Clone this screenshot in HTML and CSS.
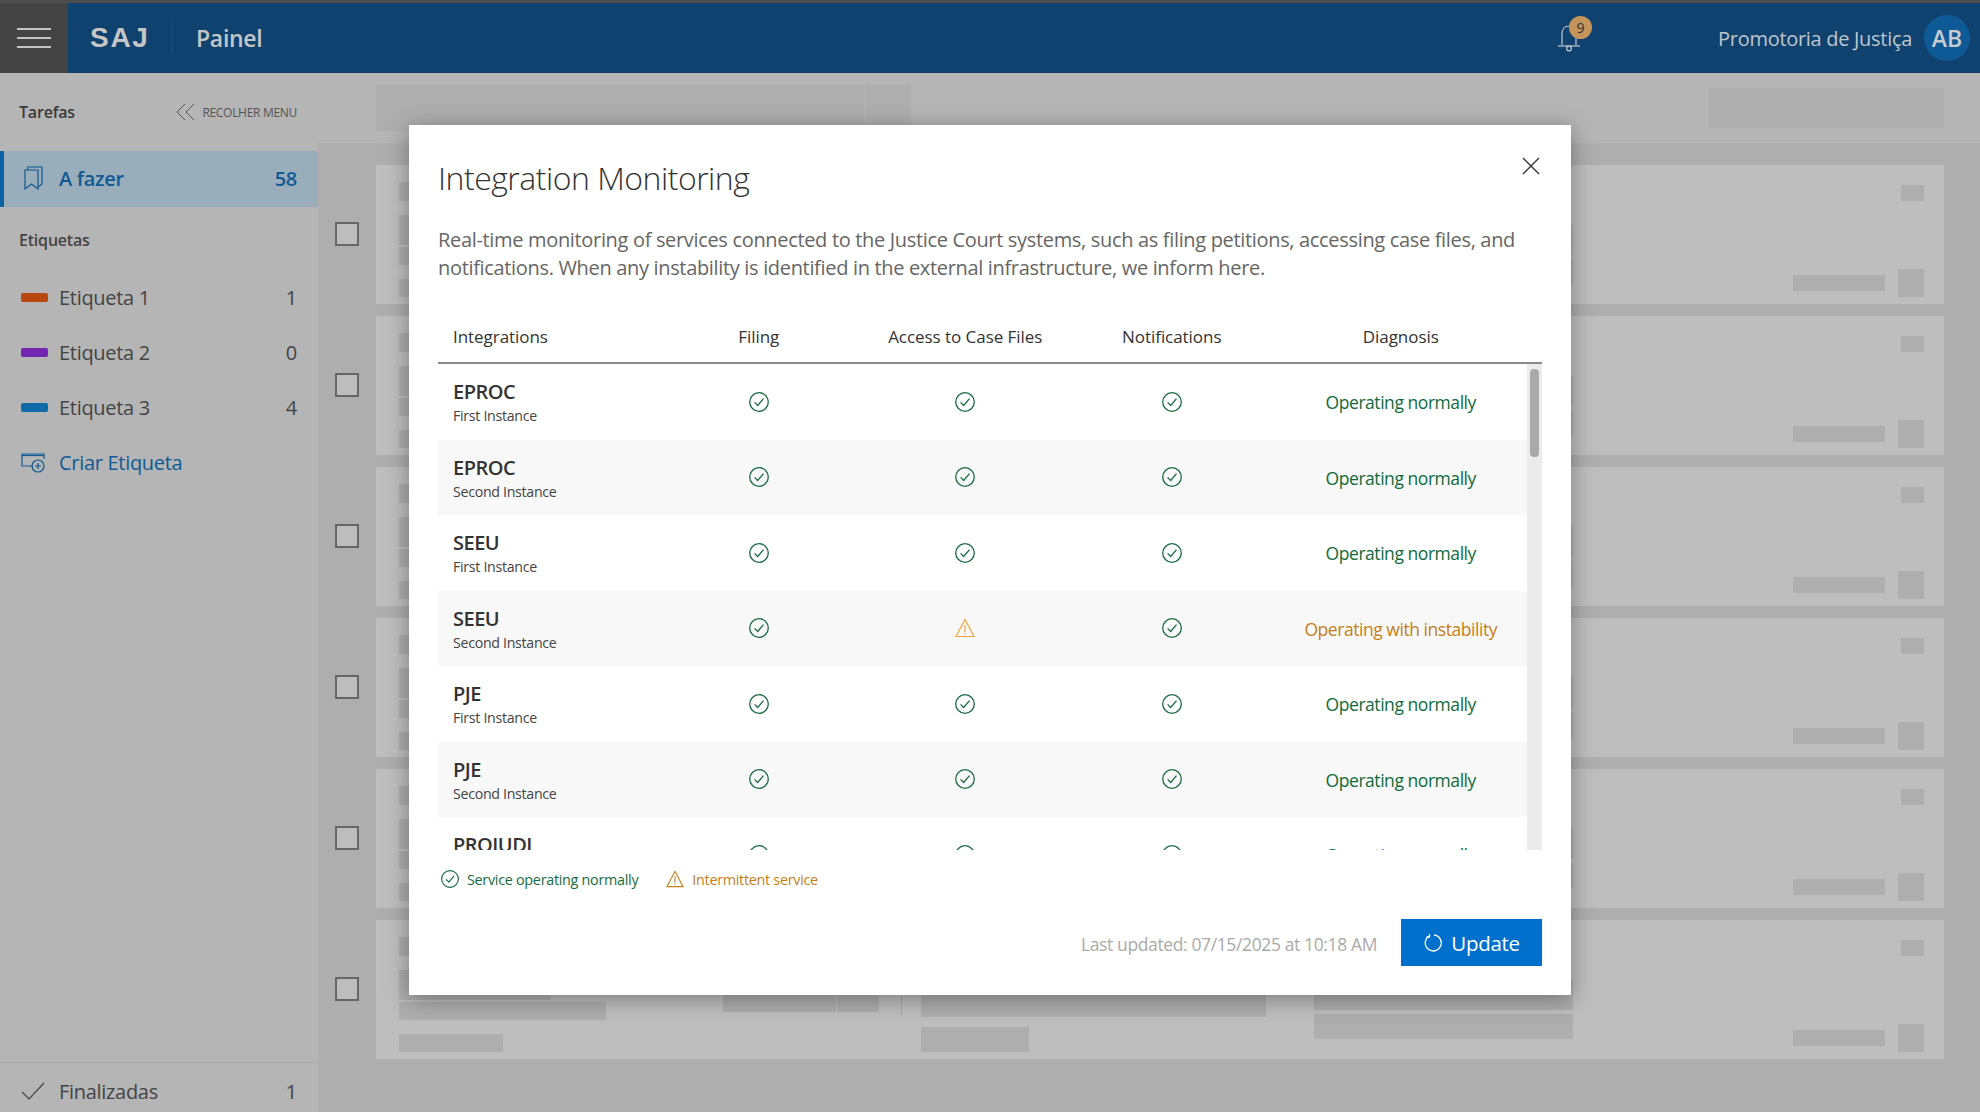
FILE: index.html
```html
<!DOCTYPE html>
<html lang="en">
<head>
    <meta charset="UTF-8">
    <title>SAJ Painel</title>
    <link rel="stylesheet" href="styles.css">
</head>
<body>

<svg class="sprite" width="0" height="0">
    <symbol id="ok" viewBox="0 0 20 20">
        <circle cx="10" cy="10" r="9.300" fill="none" stroke="currentColor" stroke-width="1.300"/>
        <path d="M5.600 10.400l3.100 3.100 5.800-6.900" fill="none" stroke="currentColor" stroke-width="1.300"/>
    </symbol>
    <symbol id="warn" viewBox="0 0 20 20">
        <path d="M10 1.500L19 18.500H1z" fill="none" stroke="currentColor" stroke-width="1.200"/>
        <path d="M10 7v7M10 15v1.400" fill="none" stroke="currentColor" stroke-width="1.200"/>
    </symbol>
</svg>

<header class="topbar">
    <button class="menu-btn">
        <span></span><span></span><span></span>
    </button>
    <div class="logo">SAJ</div>
    <div class="app-title">Painel</div>
    <div class="bell">
        <svg width="24" height="30" viewBox="0 0 24 30" fill="none" stroke="#c3c9cf" stroke-width="1.2">
            <path d="M5 22V11c0-5 3-8 7-8s7 3 7 8v11"/>
            <path d="M1 23h22"/>
            <circle cx="12" cy="25.5" r="2.4"/>
        </svg>
        <span class="badge">9</span>
    </div>
    <div class="user-name">Promotoria de Justiça</div>
    <div class="avatar">AB</div>
</header>

<div class="layout">
    <aside class="sidebar">
        <div class="side-head">
            <span class="side-title">Tarefas</span>
            <span class="collapse">
                <svg width="19" height="18" viewBox="0 0 19 18" fill="none" stroke="#555" stroke-width="1">
                    <path d="M9 1L1 9l8 8M18 1l-8 8 8 8"/>
                </svg>
                RECOLHER MENU
            </span>
        </div>
        <div class="side-item active">
            <svg class="item-icon" width="19" height="24" viewBox="0 0 19 24" fill="none" stroke="#0f5a94" stroke-width="1.2">
                <path d="M1 4h13v19l-6.500-5L1 23z"/>
                <path d="M4 4V1h14v17l-4 3"/>
            </svg>
            <span class="item-label">A fazer</span>
            <span class="item-count">58</span>
        </div>
        <div class="side-title side-section">Etiquetas</div>
        <div class="side-item">
            <span class="swatch orange"></span>
            <span class="item-label">Etiqueta 1</span>
            <span class="item-count">1</span>
        </div>
        <div class="side-item">
            <span class="swatch purple"></span>
            <span class="item-label">Etiqueta 2</span>
            <span class="item-count">0</span>
        </div>
        <div class="side-item">
            <span class="swatch blue"></span>
            <span class="item-label">Etiqueta 3</span>
            <span class="item-count">4</span>
        </div>
        <div class="side-item create">
            <svg class="item-icon" width="25" height="20" viewBox="0 0 25 20" fill="none" stroke="#0f5a94" stroke-width="1.2">
                <path d="M12 13H1V1h22v5"/>
                <path d="M1 2.500h22"/>
                <circle cx="17" cy="13" r="6"/>
                <path d="M17 10v6M14 13h6"/>
            </svg>
            <span class="item-label">Criar Etiqueta</span>
        </div>
        <div class="side-foot">
            <div class="side-item">
                <svg class="item-icon" width="24" height="18" viewBox="0 0 24 18" fill="none" stroke="#444" stroke-width="1.2">
                    <path d="M1 10l7 7L23 1"/>
                </svg>
                <span class="item-label">Finalizadas</span>
                <span class="item-count">1</span>
            </div>
        </div>
    </aside>

    <main class="content">
        <div class="toolbar">
            <div class="tool-left"><i></i><i></i></div>
            <div class="tool-right"></div>
        </div>
        <div class="task-list">
            <div class="task"><span class="check"></span><div class="card"><div class="c1"><i></i><i></i><i></i><i></i></div><div class="c2"><i></i><i></i></div><div class="c-line"></div><div class="c3"><i></i><i></i></div><div class="c4"><i></i><i></i></div><div class="c5"><i class="tiny"></i><div class="c5-foot"><i></i><i></i></div></div></div></div>
            <div class="task"><span class="check"></span><div class="card"><div class="c1"><i></i><i></i><i></i><i></i></div><div class="c2"><i></i><i></i></div><div class="c-line"></div><div class="c3"><i></i><i></i></div><div class="c4"><i></i><i></i></div><div class="c5"><i class="tiny"></i><div class="c5-foot"><i></i><i></i></div></div></div></div>
            <div class="task"><span class="check"></span><div class="card"><div class="c1"><i></i><i></i><i></i><i></i></div><div class="c2"><i></i><i></i></div><div class="c-line"></div><div class="c3"><i></i><i></i></div><div class="c4"><i></i><i></i></div><div class="c5"><i class="tiny"></i><div class="c5-foot"><i></i><i></i></div></div></div></div>
            <div class="task"><span class="check"></span><div class="card"><div class="c1"><i></i><i></i><i></i><i></i></div><div class="c2"><i></i><i></i></div><div class="c-line"></div><div class="c3"><i></i><i></i></div><div class="c4"><i></i><i></i></div><div class="c5"><i class="tiny"></i><div class="c5-foot"><i></i><i></i></div></div></div></div>
            <div class="task"><span class="check"></span><div class="card"><div class="c1"><i></i><i></i><i></i><i></i></div><div class="c2"><i></i><i></i></div><div class="c-line"></div><div class="c3"><i></i><i></i></div><div class="c4"><i></i><i></i></div><div class="c5"><i class="tiny"></i><div class="c5-foot"><i></i><i></i></div></div></div></div>
            <div class="task"><span class="check"></span><div class="card"><div class="c1"><i></i><i></i><i></i><i></i></div><div class="c2"><i></i><i></i></div><div class="c-line"></div><div class="c3"><i></i><i></i></div><div class="c4"><i></i><i></i></div><div class="c5"><i class="tiny"></i><div class="c5-foot"><i></i><i></i></div></div></div></div>
        </div>
    </main>
</div>

<div class="modal">
    <div class="modal-head">
        <h2>Integration Monitoring</h2>
        <svg class="close" width="18" height="18" viewBox="0 0 18 18" stroke="#333" stroke-width="1.3">
            <path d="M1 1l16 16M17 1L1 17"/>
        </svg>
    </div>
    <p class="modal-desc">Real-time monitoring of services connected to the Justice Court systems, such as filing petitions, accessing case files, and notifications. When any instability is identified in the external infrastructure, we inform here.</p>

    <div class="table-head">
        <div class="col-name">Integrations</div>
        <div>Filing</div>
        <div>Access to Case Files</div>
        <div>Notifications</div>
        <div>Diagnosis</div>
    </div>

    <div class="table-wrap">
        <div class="table-body">
            <div class="row">
                <div class="col-name"><div class="name">EPROC</div><div class="sub">First Instance</div></div>
                <svg class="ico"><use href="#ok"/></svg>
                <svg class="ico"><use href="#ok"/></svg>
                <svg class="ico"><use href="#ok"/></svg>
                <div class="diag">Operating normally</div>
            </div>
            <div class="row">
                <div class="col-name"><div class="name">EPROC</div><div class="sub">Second Instance</div></div>
                <svg class="ico"><use href="#ok"/></svg>
                <svg class="ico"><use href="#ok"/></svg>
                <svg class="ico"><use href="#ok"/></svg>
                <div class="diag">Operating normally</div>
            </div>
            <div class="row">
                <div class="col-name"><div class="name">SEEU</div><div class="sub">First Instance</div></div>
                <svg class="ico"><use href="#ok"/></svg>
                <svg class="ico"><use href="#ok"/></svg>
                <svg class="ico"><use href="#ok"/></svg>
                <div class="diag">Operating normally</div>
            </div>
            <div class="row">
                <div class="col-name"><div class="name">SEEU</div><div class="sub">Second Instance</div></div>
                <svg class="ico"><use href="#ok"/></svg>
                <svg class="ico warn"><use href="#warn"/></svg>
                <svg class="ico"><use href="#ok"/></svg>
                <div class="diag unstable">Operating with instability</div>
            </div>
            <div class="row">
                <div class="col-name"><div class="name">PJE</div><div class="sub">First Instance</div></div>
                <svg class="ico"><use href="#ok"/></svg>
                <svg class="ico"><use href="#ok"/></svg>
                <svg class="ico"><use href="#ok"/></svg>
                <div class="diag">Operating normally</div>
            </div>
            <div class="row">
                <div class="col-name"><div class="name">PJE</div><div class="sub">Second Instance</div></div>
                <svg class="ico"><use href="#ok"/></svg>
                <svg class="ico"><use href="#ok"/></svg>
                <svg class="ico"><use href="#ok"/></svg>
                <div class="diag">Operating normally</div>
            </div>
            <div class="row">
                <div class="col-name"><div class="name">PROJUDI</div><div class="sub">First Instance</div></div>
                <svg class="ico"><use href="#ok"/></svg>
                <svg class="ico"><use href="#ok"/></svg>
                <svg class="ico"><use href="#ok"/></svg>
                <div class="diag">Operating normally</div>
            </div>
        </div>
        <div class="scroll-track"><div class="scroll-thumb"></div></div>
    </div>

    <div class="legend">
        <span class="legend-item good"><svg class="ico-small"><use href="#ok"/></svg>Service operating normally</span>
        <span class="legend-item bad"><svg class="ico-small"><use href="#warn"/></svg>Intermittent service</span>
    </div>

    <div class="modal-foot">
        <span class="updated">Last updated: 07/15/2025 at 10:18 AM</span>
        <button class="update-btn">
            <svg width="20" height="20" viewBox="0 0 20 20" fill="none" stroke="#fff" stroke-width="1.3">
                <path d="M6 3.200A8 8 0 1 0 11 2"/>
                <path d="M6.500 1v3h-3"/>
            </svg>
            Update
        </button>
    </div>
</div>

</body>
</html>
```

FILE: styles.css
```css
* {
    box-sizing: border-box;
}
body {
    margin: 0;
    width: 1980px;
    height: 1112px;
    overflow: hidden;
    font-family: "Open Sans", "Noto Sans", sans-serif;
    background: #aeaeae;
    color: #333;
}
.sprite {
    display: block;
    height: 0;
}

/* top bar */
.topbar {
    display: flex;
    align-items: center;
    height: 73px;
    background: #10426f;
    border-top: 3px solid #4c4c4c;
}
.menu-btn {
    width: 68px;
    height: 70px;
    padding: 0 17px;
    background: #444;
    border: none;
    display: flex;
    flex-direction: column;
    justify-content: center;
    gap: 7px;
}
.menu-btn span {
    display: block;
    height: 2px;
    background: #c4c4c4;
}
.logo {
    margin-left: 22px;
    width: 82px;
    height: 34px;
    line-height: 34px;
    font-family: "Liberation Sans", sans-serif;
    font-size: 28px;
    font-weight: 700;
    letter-spacing: 1.7px;
    color: #c6c6c6;
    border-right: 1px solid #174e80;
}
.app-title {
    margin-left: 24px;
    font-size: 23px;
    font-weight: 600;
    color: #c6c6c6;
    letter-spacing: -0.3px;
}
.bell {
    position: relative;
    margin-left: auto;
    height: 30px;
    margin-right: 137px;
}
.badge {
    position: absolute;
    top: -7px;
    left: 12px;
    width: 23px;
    height: 23px;
    border-radius: 50%;
    background: #c4945a;
    color: #333;
    font-size: 14px;
    line-height: 23px;
    text-align: center;
}
.user-name {
    font-size: 20px;
    color: #bfc6cd;
    letter-spacing: -0.3px;
}
.avatar {
    width: 46px;
    height: 46px;
    margin: 0 10px 0 12px;
    border-radius: 50%;
    background: #0e5a96;
    color: #c8ccd0;
    font-size: 23px;
    font-weight: 600;
    line-height: 46px;
    text-align: center;
}

.layout {
    display: flex;
    height: 1039px;
}

/* sidebar */
.sidebar {
    width: 318px;
    background: #b5b5b5;
    display: flex;
    flex-direction: column;
}
.side-head {
    height: 78px;
    padding: 0 21px 0 19px;
    display: flex;
    align-items: center;
    justify-content: space-between;
}
.side-title {
    font-size: 16px;
    font-weight: 600;
    color: #3a3a3a;
    letter-spacing: -0.2px;
}
.side-section {
    height: 64px;
    padding: 22px 0 0 19px;
    color: #444;
}
.collapse {
    display: flex;
    align-items: center;
    gap: 7px;
    font-size: 12px;
    color: #555;
    letter-spacing: -0.3px;
}
.side-item {
    height: 55px;
    padding: 0 21px 2px;
    display: flex;
    align-items: center;
    font-size: 20px;
    color: #444;
    letter-spacing: -0.3px;
}
.side-item.active {
    height: 56px;
    padding-left: 20px;
    background: #9aadbb;
    border-left: 4px solid #0d62a3;
    color: #0f5a94;
    font-weight: 600;
}
.side-item.create {
    color: #0f5a94;
}
.item-icon {
    flex: none;
}
.item-label {
    flex: 1;
}
.active .item-icon {
    margin-right: 16px;
}
.create .item-icon {
    margin-right: 13px;
}
.side-foot .item-icon {
    margin-right: 14px;
}
.swatch {
    width: 27px;
    height: 9px;
    margin-right: 11px;
    border-radius: 2px;
}
.orange { background: #b8480f; }
.purple { background: #7326b0; }
.blue { background: #0f6aa8; }
.side-foot {
    margin-top: auto;
    height: 50px;
    padding-top: 1px;
    border-top: 1px solid #a6a6a6;
}
.side-foot .side-item {
    height: 50px;
    padding-top: 6px;
}

/* content behind the modal */
.content {
    flex: 1;
}
.toolbar {
    height: 70px;
    padding: 0 36px 0 58px;
    background: #b5b5b5;
    display: flex;
    align-items: center;
    justify-content: space-between;
}
.tool-left {
    display: flex;
    gap: 1px;
}
.tool-left i {
    display: block;
    width: 488px;
    height: 46px;
    background: #aeaeae;
}
.tool-left i + i {
    width: 46px;
}
.tool-right {
    width: 235px;
    height: 40px;
    background: #aeaeae;
}
.task-list {
    padding: 22px 36px 0 17px;
    display: flex;
    flex-direction: column;
    gap: 12px;
}
.task {
    display: flex;
    align-items: center;
}
.check {
    flex: none;
    width: 24px;
    height: 24px;
    margin: 0 17px 1px 0;
    border: 2px solid #666;
    background: #bdbdbd;
}
.card {
    flex: 1;
    height: 139px;
    padding: 0 20px 0 23px;
    background: #bebebe;
    display: grid;
    grid-template-columns: 324px 178px 20px 393px 479px 131px;
}
.card i {
    display: block;
    background: #aeaeae;
}
.c1 {
    padding-top: 17px;
}
.c1 i:nth-child(1) { width: 200px; height: 19px; }
.c1 i:nth-child(2) { width: 152px; height: 30px; margin-top: 14px; }
.c1 i:nth-child(3) { width: 207px; height: 18px; margin-top: 2px; }
.c1 i:nth-child(4) { width: 104px; height: 18px; margin-top: 14px; }
.c2 {
    padding-top: 67px;
    display: flex;
    gap: 1px;
}
.c2 i { height: 25px; width: 113px; }
.c2 i + i { width: 42px; }
.c-line {
    width: 1px;
    height: 79px;
    margin-top: 17px;
    background: #a8a8a8;
}
.c3 {
    padding-top: 50px;
}
.c3 i:nth-child(1) { width: 345px; height: 47px; }
.c3 i:nth-child(2) { width: 108px; height: 25px; margin-top: 10px; }
.c4 {
    padding-top: 60px;
}
.c4 i:nth-child(1) { width: 259px; height: 30px; }
.c4 i:nth-child(2) { width: 259px; height: 25px; margin-top: 4px; }
.c5 {
    padding: 20px 0 7px;
    display: flex;
    flex-direction: column;
    justify-content: space-between;
}
.c5 .tiny {
    width: 23px;
    height: 16px;
    margin-left: auto;
}
.c5-foot {
    display: flex;
    align-items: center;
    justify-content: space-between;
}
.c5-foot i { width: 92px; height: 16px; }
.c5-foot i + i { width: 26px; height: 28px; }

/* modal */
.modal {
    position: absolute;
    top: 125px;
    left: 409px;
    width: 1162px;
    height: 870px;
    padding: 30px 29px 0;
    background: #fff;
    box-shadow: 0 4px 22px rgba(0, 0, 0, 0.35);
    display: flex;
    flex-direction: column;
}
.modal-head {
    display: flex;
    align-items: center;
    justify-content: space-between;
    height: 44px;
}
.modal-head h2 {
    margin: 0;
    font-size: 32px;
    font-weight: 300;
    color: #333;
    letter-spacing: -0.5px;
}
.close {
    margin: -22px 2px 0 0;
}
.modal-desc {
    margin: 27px 0 0;
    font-size: 20px;
    line-height: 28px;
    color: #666;
    letter-spacing: -0.33px;
}
.table-head,
.row {
    display: grid;
    grid-template-columns: 217.5px repeat(3, 206.5px) 251.5px;
    justify-items: center;
    align-items: center;
}
.table-head {
    margin-top: 30px;
    height: 52px;
    padding-bottom: 2px;
    border-bottom: 2px solid #8a8a8a;
    font-size: 17px;
    font-weight: 500;
    color: #333;
    letter-spacing: -0.05px;
}
.col-name {
    justify-self: start;
    padding-left: 15px;
}
.table-wrap {
    display: flex;
    height: 486px;
    overflow: hidden;
}
.table-body {
    width: 1089px;
    flex: none;
}
.row {
    height: 75.5px;
}
.row:nth-child(even) {
    background: #f8f8f8;
}
.row .col-name {
    align-self: start;
    padding-top: 16px;
}
.name {
    font-size: 20px;
    line-height: 24px;
    font-weight: 550;
    color: #333;
    letter-spacing: -0.5px;
}
.sub {
    font-size: 14.200px;
    line-height: 24px;
    color: #444;
    letter-spacing: -0.3px;
}
.ico {
    width: 20px;
    height: 20px;
    color: #1a6b42;
}
.ico.warn {
    color: #f5a33c;
}
.diag {
    font-size: 17.500px;
    color: #0f6b3c;
    letter-spacing: -0.45px;
    padding-top: 1px;
}
.diag.unstable {
    color: #c47f17;
}
.scroll-track {
    flex: 1;
    background: #ebebeb;
    padding: 5px 3px 0;
}
.scroll-thumb {
    height: 88px;
    border-radius: 4px;
    background: #a9a9a9;
}
.legend {
    margin-top: 15px;
    height: 28px;
    display: flex;
    align-items: center;
    gap: 28px;
    padding-left: 3px;
    font-size: 14.400px;
    letter-spacing: -0.3px;
}
.legend-item {
    display: flex;
    align-items: center;
    gap: 8px;
}
.ico-small {
    width: 18px;
    height: 18px;
}
.good { color: #1a6b42; }
.bad { color: #c47f17; }
.modal-foot {
    margin-top: 26px;
    display: flex;
    align-items: center;
    justify-content: flex-end;
    gap: 24px;
}
.updated {
    font-size: 17.500px;
    color: #aaa;
    letter-spacing: -0.38px;
    padding-top: 3px;
}
.update-btn {
    width: 141px;
    height: 47px;
    background: #0070cc;
    border: none;
    color: #fff;
    font-family: inherit;
    font-size: 20.500px;
    font-weight: 500;
    letter-spacing: -0.3px;
    display: flex;
    align-items: center;
    justify-content: center;
    gap: 8px;
}
```
